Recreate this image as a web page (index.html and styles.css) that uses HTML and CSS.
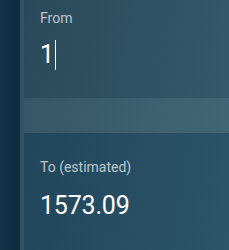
FILE: index.html
```html
<!DOCTYPE html>
<html>
<head>
<meta charset="utf-8">
<link rel="stylesheet" href="styles.css">
</head>
<body>
<div class="app">
  <aside class="rail"></aside>
  <main class="panel">
    <section class="field from">
      <div class="label">From</div>
      <div class="input">1<span class="caret"></span></div>
    </section>
    <div class="band"></div>
    <section class="field to">
      <div class="label">To (estimated)</div>
      <div class="value">1573.09</div>
    </section>
  </main>
</div>
</body>
</html>
```
FILE: styles.css
```css
html, body {
  margin: 0;
  padding: 0;
  width: 229px;
  height: 250px;
  overflow: hidden;
  background: #0f2f44;
  font-family: Roboto, "Liberation Sans", sans-serif;
}
.app {
  display: flex;
  height: 250px;
}
.rail {
  width: 20px;
  flex: none;
  background: linear-gradient(90deg, #113248, #0d2b3f);
}
.panel {
  flex: 1;
  display: flex;
  flex-direction: column;
  border-left: 4px solid #36525f;
}
.field {
  padding-left: 16px;
}
.from {
  height: 98px;
  box-sizing: border-box;
  padding-top: 8px;
  background: linear-gradient(100deg, #2b495b, #35586b);
}
.band {
  height: 35px;
  background: linear-gradient(100deg, #375667, #426675);
}
.to {
  flex: 1;
  padding-top: 24px;
  background: linear-gradient(100deg, #22465c, #2c5569);
}
.label {
  font-size: 14px;
  line-height: 20px;
  color: #bcc6cc;
}
.input {
  margin-top: 12px;
  font-size: 25px;
  line-height: 30px;
  color: #ffffff;
  display: flex;
  align-items: center;
}
.caret {
  display: inline-block;
  width: 1px;
  height: 30px;
  margin-left: 1px;
  background: #ffffff;
}
.value {
  margin-top: 14px;
  font-size: 25px;
  line-height: 30px;
  letter-spacing: -0.2px;
  color: #ffffff;
}
```
